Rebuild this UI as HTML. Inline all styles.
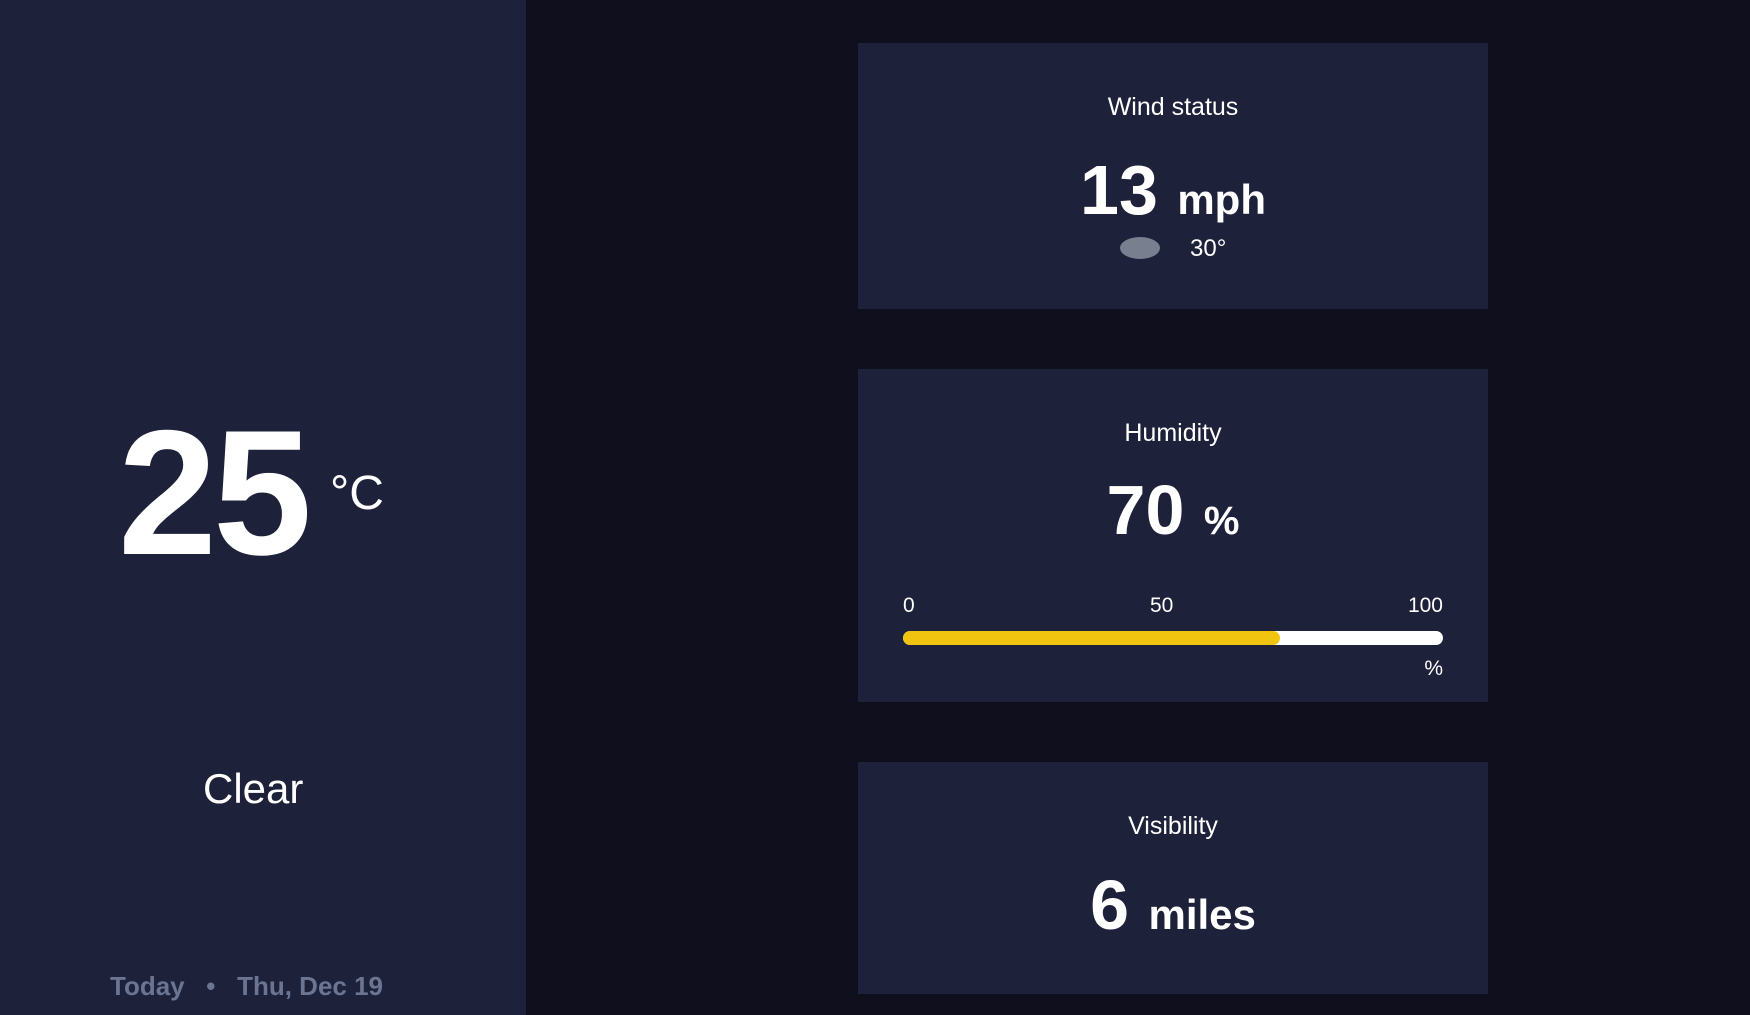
<!DOCTYPE html>
<html><head><meta charset="utf-8"><style>
*{margin:0;padding:0;box-sizing:border-box}
body{width:1750px;height:1015px;background:#100f1e;font-family:"Liberation Sans",sans-serif;color:#fff;position:relative;overflow:hidden}
.left{position:absolute;left:0;top:0;width:526px;height:1015px;background:#1e213a}
.a{position:absolute;white-space:nowrap;line-height:1}
.card{position:absolute;left:858px;width:630px;background:#1e213a}
.c{position:absolute;left:0;width:630px;text-align:center;white-space:nowrap;line-height:1}
</style></head><body>
<div class="left">
  <div class="a" style="left:118px;top:404px;font-size:178px;font-weight:bold;letter-spacing:-4px">25</div>
  <div class="a" style="left:330px;top:470px;font-size:48px;font-weight:300">°C</div>
  <div class="a" style="left:203px;top:768px;font-size:42px">Clear</div>
  <div class="a" style="left:110px;top:973px;font-size:26px;font-weight:bold;color:#6b7591">Today &nbsp;&nbsp;•&nbsp;&nbsp; Thu, Dec 19</div>
</div>
<div class="card" style="top:43px;height:266px">
  <div class="c" style="top:52px;font-size:25px">Wind status</div>
  <div class="c" style="top:112px;font-size:70px;font-weight:bold">13 <span style="font-size:42px">mph</span></div>
  <div style="position:absolute;left:262px;top:194px;width:40px;height:22px;border-radius:50%;background:#787f8f"></div>
  <div class="a" style="left:332px;top:194px;font-size:24px">30°</div>
</div>
<div class="card" style="top:369px;height:333px">
  <div class="c" style="top:52px;font-size:25px">Humidity</div>
  <div class="c" style="top:106px;font-size:70px;font-weight:bold">70 <span style="font-size:40px">%</span></div>
  <div class="a" style="left:45px;top:226px;font-size:21px">0</div>
  <div class="a" style="left:292px;top:226px;font-size:21px">50</div>
  <div class="a" style="right:45px;top:226px;font-size:21px">100</div>
  <div style="position:absolute;left:45px;top:262px;width:540px;height:14px;border-radius:7px;background:#fff;overflow:hidden"><div style="width:377px;height:14px;border-radius:7px;background:#f1c40f"></div></div>
  <div class="a" style="right:45px;top:289px;font-size:21px">%</div>
</div>
<div class="card" style="top:762px;height:232px">
  <div class="c" style="top:52px;font-size:25px">Visibility</div>
  <div class="c" style="top:108px;font-size:70px;font-weight:bold">6 <span style="font-size:42px">miles</span></div>
</div>
</body></html>
